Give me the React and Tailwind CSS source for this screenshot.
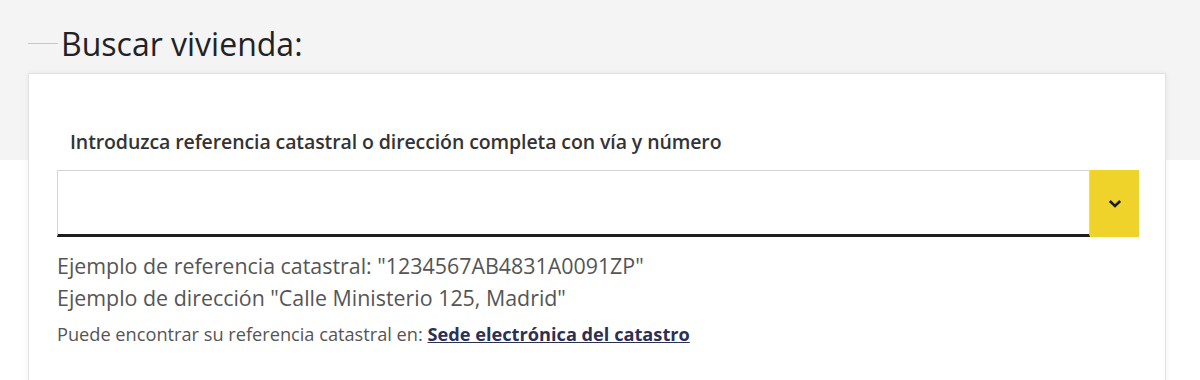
export default function App() {
    return (
        <div className="min-h-[380px] bg-[linear-gradient(#f4f4f4_0_160px,#ffffff_160px)] font-['Open_Sans',sans-serif] text-[#333] overflow-hidden">
            <div className="pl-[28px] pt-[24px] w-[1166px]">
                <div className="flex items-center h-[40px]">
                    <div className="w-[30px] h-px bg-[#c8c8c8] mt-[-2px]" />
                    <h2 className="ml-[3px] text-[32px] leading-[40px] text-[#222]">
                        Buscar vivienda:
                    </h2>
                </div>
                <div className="mt-[9px] bg-white border border-[#e2e2e2] shadow-[0_0_6px_rgba(0,0,0,0.06)] pl-[28px] pr-[26px] pt-[56px] h-[320px]">
                    <label className="block pl-[13px] text-[19.5px] font-semibold leading-[24px] text-[#333] tracking-[-0.1px]">
                        Introduzca referencia catastral o dirección completa con vía y número
                    </label>
                    <div className="mt-[16px] flex h-[67px]">
                        <input
                            type="text"
                            className="flex-1 border border-[#d4d4d4] border-b-[3px] border-b-[#1e1e1e] bg-white outline-none px-3"
                        />
                        <button
                            type="button"
                            className="w-[49px] bg-[#efd22a] flex items-center justify-center"
                        >
                            <svg width="14" height="10" viewBox="0 0 14 10" fill="none">
                                <path
                                    d="M1.8 2 7 7 12.2 2"
                                    stroke="#1a1a1a"
                                    strokeWidth="2.6"
                                />
                            </svg>
                        </button>
                    </div>
                    <div className="mt-[13px] text-[21.4px] leading-[32px] text-[#555]">
                        <p>Ejemplo de referencia catastral: "1234567AB4831A0091ZP"</p>
                        <p>Ejemplo de dirección "Calle Ministerio 125, Madrid"</p>
                    </div>
                    <p className="mt-[8px] text-[18.2px] leading-[24px] text-[#555]">
                        Puede encontrar su referencia catastral en:{" "}
                        <a href="#" className="font-bold underline text-[#2c3153]">
                            Sede electrónica del catastro
                        </a>
                    </p>
                </div>
            </div>
        </div>
    );
}
